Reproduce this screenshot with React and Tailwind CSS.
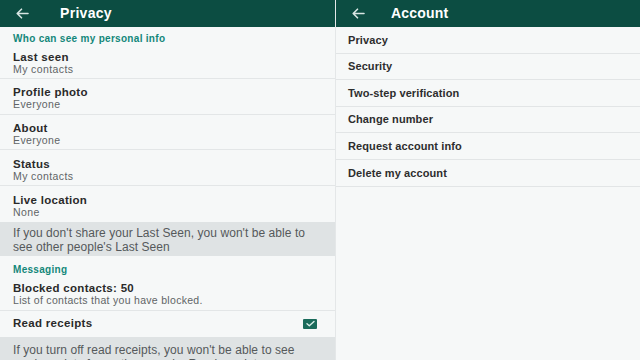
import React from "react";

const Arrow = () => (
  <svg width="13" height="11" viewBox="0 0 13 11" fill="none" stroke="#d8e6e3" strokeWidth="1.6" strokeLinecap="round" strokeLinejoin="round">
    <path d="M12 5.5H1.5M5.5 1.2L1.2 5.5L5.5 9.8" />
  </svg>
);

const Row = ({ title, sub, border = true }) => (
  <div className={`h-[35.8px] shrink-0 pl-[13px] pt-[7.5px] ${border ? "border-b border-[#e3e6e7]" : ""}`}>
    <div className="text-[11.5px] leading-[13px] font-bold tracking-[0.3px] text-[#2a2a2a]">{title}</div>
    <div className="text-[10.5px] leading-[11px] tracking-[0.4px] text-[#5f6466]">{sub}</div>
  </div>
);

const AccRow = ({ title }) => (
  <div className="h-[26.6px] shrink-0 flex items-center pl-[12px] border-b border-[#e2e5e6] text-[11px] font-bold tracking-[0.1px] text-[#2d2d2d]">
    {title}
  </div>
);

export default function App() {
  return (
    <div
      className="w-[640px] h-[360px] overflow-hidden flex bg-[#f6f8f8]"
      style={{ fontFamily: '"Liberation Sans", Arial, sans-serif' }}
    >
      <div className="w-[336px] shrink-0 flex flex-col border-r border-[#e4e7e8]">
        <div className="h-[27px] shrink-0 bg-[#0c4d42] flex items-center pl-[16px]">
          <Arrow />
          <span className="ml-[31px] text-[14px] font-bold tracking-[0.3px] text-white">Privacy</span>
        </div>
        <div className="h-[16px] shrink-0 pl-[13px] pt-[7px] text-[10px] leading-[10px] font-bold tracking-[0.3px] text-[#13877a]">
          Who can see my personal info
        </div>
        <Row title="Last seen" sub="My contacts" />
        <Row title="Profile photo" sub="Everyone" />
        <Row title="About" sub="Everyone" />
        <Row title="Status" sub="My contacts" />
        <Row title="Live location" sub="None" border={false} />
        <div className="h-[34px] shrink-0 bg-[#dfe3e4] pl-[13px] pt-[4px] text-[12px] leading-[14px] tracking-[0.06px] text-[#55595b]">
          If you don't share your Last Seen, you won't be able to
          <br />
          see other people's Last Seen
        </div>
        <div className="h-[19px] shrink-0 pl-[13px] pt-[9px] text-[10px] leading-[10px] font-bold tracking-[0.3px] text-[#13877a]">
          Messaging
        </div>
        <div className="h-[36px] shrink-0 pl-[13px] pt-[7px] border-b border-[#e3e6e7]">
          <div className="text-[11.5px] leading-[13px] font-bold tracking-[0.3px] text-[#2a2a2a]">Blocked contacts: 50</div>
          <div className="text-[10.5px] leading-[11px] tracking-[0.3px] text-[#5f6466]">List of contacts that you have blocked.</div>
        </div>
        <div className="h-[26px] shrink-0 flex items-center justify-between pl-[13px] pr-[18px]">
          <span className="text-[11.5px] font-bold tracking-[0.3px] text-[#2a2a2a]">Read receipts</span>
          <div className="w-[14px] h-[10px] bg-[#1a6b5b] rounded-[1px] flex items-center justify-center">
            <svg width="9" height="7" viewBox="0 0 9 7" fill="none" stroke="#d9efe9" strokeWidth="1.4" strokeLinecap="round" strokeLinejoin="round">
              <path d="M1 3.8L3.3 5.8L8 1.5" />
            </svg>
          </div>
        </div>
        <div className="flex-1 bg-[#dfe3e4] pl-[13px] pt-[6px] text-[12px] leading-[14px] tracking-[0.06px] text-[#55595b]">
          If you turn off read receipts, you won't be able to see
          <br />
          read receipts from other people. Read receipts are
        </div>
      </div>
      <div className="flex-1 flex flex-col">
        <div className="h-[27px] shrink-0 bg-[#0c4d42] flex items-center pl-[16px]">
          <Arrow />
          <span className="ml-[26px] text-[14px] font-bold tracking-[0.2px] text-white">Account</span>
        </div>
        <AccRow title="Privacy" />
        <AccRow title="Security" />
        <AccRow title="Two-step verification" />
        <AccRow title="Change number" />
        <AccRow title="Request account info" />
        <AccRow title="Delete my account" />
      </div>
    </div>
  );
}
